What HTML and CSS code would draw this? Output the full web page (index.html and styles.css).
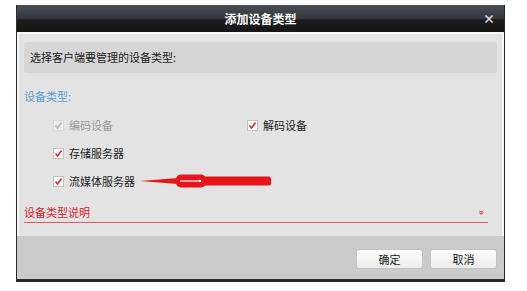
FILE: index.html
```html
<!DOCTYPE html>
<html lang="zh-CN">
<head>
  <meta charset="UTF-8">
  <title>添加设备类型</title>
  <link rel="stylesheet" href="styles.css">
</head>
<body>
  <div class="dialog">
    <div class="titlebar">
      添加设备类型
      <span class="close">&times;</span>
    </div>

    <div class="content">
      <div class="prompt">选择客户端要管理的设备类型:</div>
      <div class="label">设备类型:</div>

      <div class="types">
        <div class="item disabled">
          <svg class="check" width="11" height="11" viewBox="0 0 11 11"><rect x="0.5" y="0.5" width="10" height="10" fill="#ececec" stroke="#dadada"/><path d="M2.5 5.5 L4.5 8 L8.5 2.5" fill="none" stroke="#b4b4b4" stroke-width="1.6"/></svg>
          编码设备
        </div>
        <div class="item">
          <svg class="check" width="11" height="11" viewBox="0 0 11 11"><rect x="0.5" y="0.5" width="10" height="10" fill="#fff" stroke="#c2c2c2"/><path d="M2.5 5.5 L4.5 8 L8.5 2.5" fill="none" stroke="#d12c2c" stroke-width="1.6"/></svg>
          解码设备
        </div>
        <div class="item">
          <svg class="check" width="11" height="11" viewBox="0 0 11 11"><rect x="0.5" y="0.5" width="10" height="10" fill="#fff" stroke="#c2c2c2"/><path d="M2.5 5.5 L4.5 8 L8.5 2.5" fill="none" stroke="#d12c2c" stroke-width="1.6"/></svg>
          存储服务器
        </div>
        <div class="item empty"></div>
        <div class="item">
          <svg class="check" width="11" height="11" viewBox="0 0 11 11"><rect x="0.5" y="0.5" width="10" height="10" fill="#fff" stroke="#c2c2c2"/><path d="M2.5 5.5 L4.5 8 L8.5 2.5" fill="none" stroke="#d12c2c" stroke-width="1.6"/></svg>
          流媒体服务器
          <svg class="arrow" width="132" height="18" viewBox="0 0 132 18">
            <path d="M0 9 L38 6 L38 12 Z" fill="#e8141c"/>
            <rect x="36" y="2.5" width="30" height="13" rx="5" fill="#e8141c"/>
            <rect x="60" y="4.5" width="71" height="9" rx="2" fill="#e8141c"/>
            <path d="M40 9 L60 9" stroke="#fff" stroke-width="1.2"/>
            <circle cx="60" cy="9" r="1.3" fill="#fff"/>
          </svg>
        </div>
      </div>

      <div class="desc">
        <span>设备类型说明</span>
        <span class="more">&raquo;</span>
      </div>
    </div>

    <div class="footer">
      <button class="btn">确定</button>
      <button class="btn">取消</button>
    </div>
  </div>
</body>
</html>
```

FILE: styles.css
```css
* {
  margin: 0;
  padding: 0;
  box-sizing: border-box;
}

body {
  background-color: #fff;
  font-family: "Noto Sans CJK SC", "Liberation Sans", sans-serif;
  font-size: 11px;
  color: #222;
}

.dialog {
  width: 489px;
  margin: 5px 0 0 16px;
  border: 1px solid #2b2b2b;
  border-top: none;
}

.titlebar {
  position: relative;
  height: 27px;
  line-height: 27px;
  text-align: center;
  color: #fff;
  font-size: 12px;
  font-weight: bold;
  background: linear-gradient(#4a5058, #33373d 50%, #1d1d1d 55%, #161616);
}

.close {
  position: absolute;
  right: 9px;
  top: 0;
  font-size: 12px;
  color: #e6e6e6;
}

.content {
  background-color: #e3e3e3;
  border: 2px solid #f6f6f6;
  border-bottom: none;
  padding: 8px 5px 13px 5px;
}

.prompt {
  height: 31px;
  line-height: 31px;
  padding-left: 6px;
  background-color: #d6d6d6;
  border-radius: 3px;
  color: #222;
}

.label {
  margin-top: 13px;
  line-height: 20px;
  color: #5b9bd1;
}

.types {
  display: grid;
  grid-template-columns: 194px 1fr;
  margin-top: 5px;
  padding-left: 29px;
}

.item {
  display: flex;
  align-items: center;
  gap: 5px;
  height: 28px;
  white-space: nowrap;
}

.item.disabled {
  color: #9a9a9a;
}

.check {
  flex: none;
}

.arrow {
  flex: none;
}

.desc {
  display: flex;
  justify-content: space-between;
  margin-top: 8px;
  margin-right: 9px;
  line-height: 19px;
  color: #d8222a;
  border-bottom: 1px solid #e0565b;
}

.more {
  display: inline-block;
  transform: rotate(90deg);
  font-size: 11px;
  color: #d8222a;
  margin-right: 3px;
}

.footer {
  display: flex;
  justify-content: flex-end;
  gap: 7px;
  height: 45px;
  padding: 13px 7px 0 0;
  background-color: #cbcbcb;
  border-bottom: 2px solid #2b2b2b;
}

.btn {
  width: 67px;
  height: 20px;
  font-family: inherit;
  font-size: 11px;
  color: #222;
  background: linear-gradient(#fdfdfd, #ececec);
  border: 1px solid #c4c4c4;
  border-radius: 3px;
}
```
